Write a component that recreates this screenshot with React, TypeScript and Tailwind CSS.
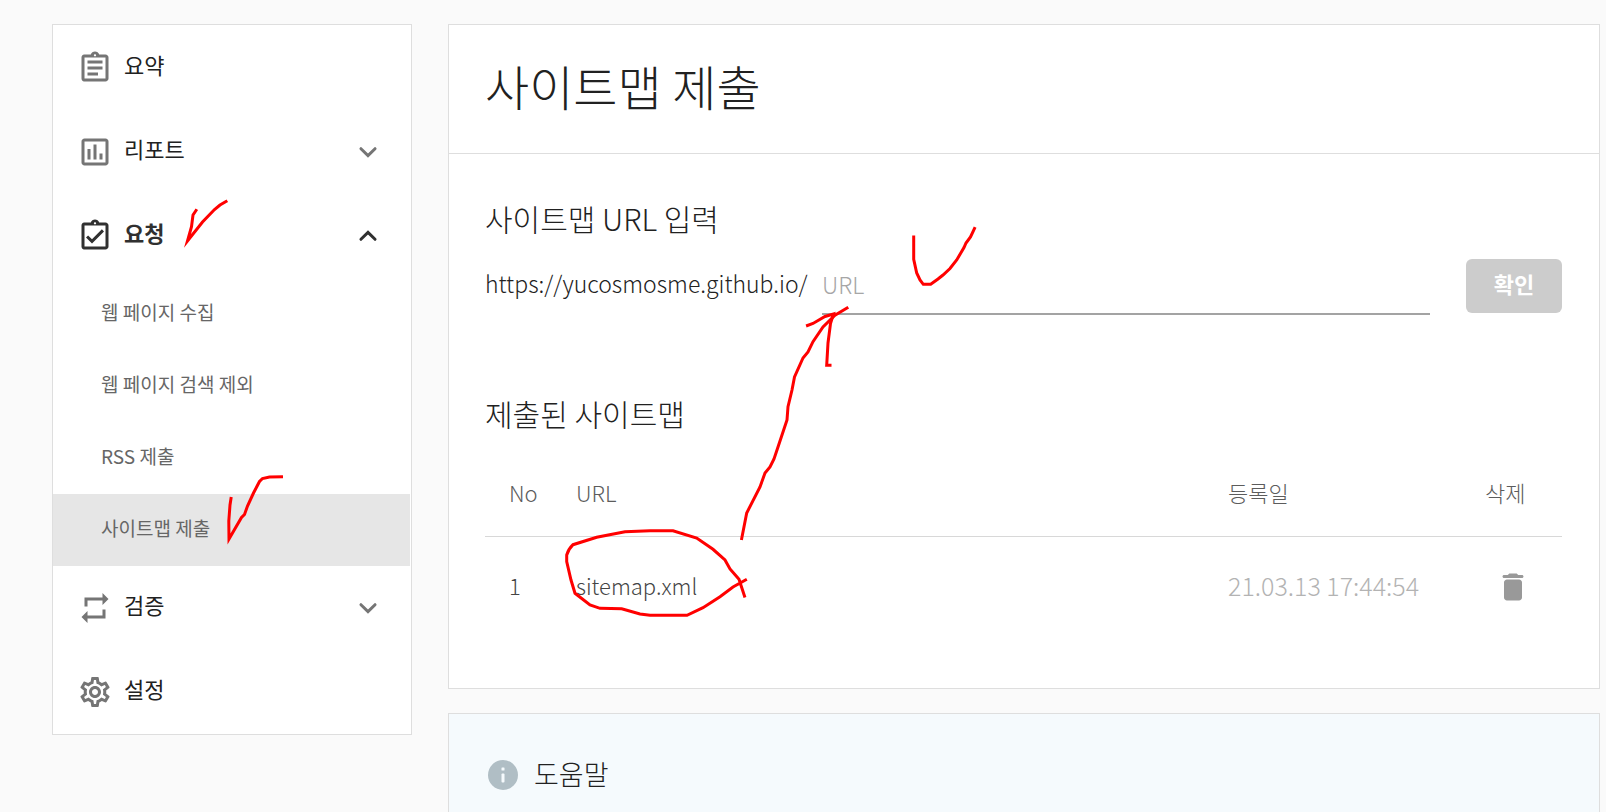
import { useState } from "react";
import type { ReactNode } from "react";
import {
  MdOutlineAssessment,
  MdOutlineAssignment,
  MdOutlineAssignmentTurnedIn,
  MdOutlineSettings,
  MdRepeat,
} from "react-icons/md";

const subItems = ["웹 페이지 수집", "웹 페이지 검색 제외", "RSS 제출", "사이트맵 제출"];

const sitemaps = [{ no: 1, url: "sitemap.xml", date: "21.03.13 17:44:54" }];

function Chevron({ open }: { open?: boolean }) {
  return (
    <svg
      viewBox="0 0 24 24"
      className="size-9"
      fill="none"
      stroke="currentColor"
      strokeWidth="2"
      strokeLinecap="round"
      strokeLinejoin="miter"
      aria-hidden="true"
    >
      <path d={open ? "M7.3 14.2 12 9.6l4.7 4.6" : "M7.3 9.8 12 14.4l4.7-4.6"} />
    </svg>
  );
}

function TrashIcon() {
  return (
    <svg viewBox="0 0 24 24" className="size-9" fill="currentColor" aria-hidden="true">
      <path d="M6 19c0 1.1.9 2 2 2h8c1.1 0 2-.9 2-2V9c0-1.1-.9-2-2-2H8c-1.1 0-2 .9-2 2v10zM18 4h-2.5l-.71-.71c-.18-.18-.44-.29-.7-.29H9.91c-.26 0-.52.11-.7.29L8.5 4H6c-.55 0-1 .45-1 1s.45 1 1 1h12c.55 0 1-.45 1-1s-.45-1-1-1z" />
    </svg>
  );
}

function InfoIcon() {
  return (
    <svg viewBox="0 0 24 24" className="size-9 text-[#b0bec5]" aria-hidden="true">
      <circle cx="12" cy="12" r="10" fill="currentColor" />
      <rect x="11" y="7" width="2" height="2" rx="0.4" fill="#f5fafd" />
      <rect x="11" y="11" width="2" height="6" rx="0.6" fill="#f5fafd" />
    </svg>
  );
}

function NavItem({
  icon,
  label,
  active,
  expandable,
}: {
  icon: ReactNode;
  label: string;
  active?: boolean;
  expandable?: boolean;
}) {
  return (
    <button
      type="button"
      aria-expanded={expandable ? !!active : undefined}
      className={`flex h-21 w-full items-center pr-[25px] pl-6 text-left ${active ? "text-[#303030]" : "text-[#757575]"}`}
    >
      {icon}
      <span
        className={`ml-[11px] flex-1 pb-2 text-[22px] leading-8 ${active ? "font-bold text-[#303030]" : "text-[#212121]"}`}
      >
        {label}
      </span>
      {expandable && <Chevron open={active} />}
    </button>
  );
}

function Sidebar() {
  return (
    <nav className="w-90 shrink-0 border border-[#dedede] bg-white pt-px">
      <NavItem icon={<MdOutlineAssignment className="size-9" />} label="요약" />
      <NavItem icon={<MdOutlineAssessment className="size-9" />} label="리포트" expandable />
      <NavItem icon={<MdOutlineAssignmentTurnedIn className="size-9" />} label="요청" active expandable />
      <ul className="pr-px">
        {subItems.map((item) => (
          <li key={item}>
            <a
              href="#"
              className={`flex h-18 items-center pb-1 pl-12 text-[19px] leading-7 text-[#666666] ${
                item === "사이트맵 제출" ? "bg-[#e6e6e6]" : ""
              }`}
            >
              {item}
            </a>
          </li>
        ))}
      </ul>
      <NavItem icon={<MdRepeat className="size-9" />} label="검증" expandable />
      <NavItem icon={<MdOutlineSettings className="size-9" />} label="설정" />
    </nav>
  );
}

function SitemapForm() {
  const [url, setUrl] = useState("");
  return (
    <form onSubmit={(e) => e.preventDefault()}>
      <h2 className="text-[30px] leading-10 font-light text-[#212121]">사이트맵 URL 입력</h2>
      <div className="mt-[21px] flex h-14 items-start">
        <label
          htmlFor="sitemap-url"
          className="w-[337px] shrink-0 pt-2 text-[23px] leading-8 font-light text-[#222222]"
        >
          https://yucosmosme.github.io/
        </label>
        <input
          id="sitemap-url"
          type="text"
          placeholder="URL"
          value={url}
          onChange={(e) => setUrl(e.target.value)}
          className="h-14 min-w-0 flex-1 border-b-2 border-[#a3a3a3] bg-transparent pb-1 text-[23px] font-light text-[#333333] outline-none placeholder:text-[#a6a6a6]"
        />
        <button
          type="submit"
          className="ml-9 h-[54px] w-24 rounded-md bg-[#cccccc] pb-1.5 text-[22px] leading-8 font-bold text-white"
        >
          확인
        </button>
      </div>
    </form>
  );
}

function SitemapTable() {
  return (
    <table className="mt-4 w-full table-fixed text-left text-[22px] leading-8 font-light">
      <thead>
        <tr className="h-[87px] border-b border-[#d8d8d8] text-[#5c5c5c]">
          <th className="w-[91px] pl-6 font-light">No</th>
          <th className="font-light">URL</th>
          <th className="w-[257px] font-light">등록일</th>
          <th className="w-[77px] font-light">삭제</th>
        </tr>
      </thead>
      <tbody>
        {sitemaps.map((row) => (
          <tr key={row.no} className="h-25 text-[#444444]">
            <td className="pb-0.5 pl-6">{row.no}</td>
            <td className="pb-0.5">{row.url}</td>
            <td className="pb-0.5 text-[25px] text-[#b3b3b3]">{row.date}</td>
            <td className="pt-0.5 pl-2.5">
              <button type="button" aria-label="삭제" className="block text-[#999999]">
                <TrashIcon />
              </button>
            </td>
          </tr>
        ))}
      </tbody>
    </table>
  );
}

function Annotations() {
  return (
    <svg
      className="pointer-events-none absolute top-0 left-0 h-[812px] w-[1606px]"
      viewBox="0 0 1606 812"
      fill="none"
      stroke="#ff0000"
      strokeWidth="3"
      strokeLinejoin="miter"
      strokeMiterlimit="8"
      strokeLinecap="square"
      aria-hidden="true"
    >
      <path d="M196 210.500 L193 215 L191.500 226.700 L187.500 241 L202.500 222 L214.500 209.500 L220 205 L226 201.500" />
      <path d="M231 498.500 L230 505 L228.800 521 L229 539 L241.500 517.500 L244.500 514.500 L247.500 506 L253.500 493 L259.500 481.500 L262.500 478.500 L269.500 477 L281.500 476.700" />
      <path d="M913.700 237 V259.300 L916.700 273 L920 280 L923.300 284.300 H930.700 L938 279 L943 275 L950 268.500 L956.700 260 L964 247.500 L966 243 L970.500 237 L974.500 228.500" />
      <path d="M847 308 L835 315.300 L823 327 L813 341.700 L808 352 L803 358 L794.500 377 L792 390 L788 406.700 L787 420 L778 447 L774 459 L770 467 L765 473 L760 487 L746.700 513 L741.700 538.500" />
      <path d="M807.500 325.500 L813 323.500 L825 316.500 L833.500 314 L830.500 323.500 L828 343 L826.700 365.300 L830 365.300" />
      <path d="M745.500 580 L733 587 L720 596.700 L703 607.700 L687 615.300 H650 L640 614 L621.700 608.700 L600 608.300 L590 605 L575 593.300 L571 580 L566.700 561.700 V555 Q568.500 549 573 544.700 L596.700 537.300 L625 531.700 L650 530.700 H673 L696.700 538 L713 549.300 L725 560 L730 569 L739 579.300 L744.500 596" />
    </svg>
  );
}

export default function App() {
  return (
    <div className="relative h-screen overflow-hidden bg-[#fafafa] font-['Noto_Sans_CJK_KR',sans-serif]">
      <div className="flex items-start gap-9 pt-6 pr-1.5 pl-[52px]">
        <Sidebar />
        <div className="flex min-w-0 flex-1 flex-col gap-6">
          <main className="border border-[#dedede] bg-white">
            <header className="flex h-[129px] items-center border-b border-[#dedede] px-9 pb-2">
              <h1 className="text-[48px] leading-16 font-light text-[#212121]">사이트맵 제출</h1>
            </header>
            <div className="pt-11 pr-[37px] pb-13 pl-9">
              <SitemapForm />
              <h2 className="mt-[78px] text-[30px] leading-10 font-light text-[#212121]">제출된 사이트맵</h2>
              <SitemapTable />
            </div>
          </main>
          <aside className="flex h-60 items-start border border-[#dedede] bg-[#f5fafd] px-9 pt-[43px]">
            <InfoIcon />
            <h2 className="ml-[13px] text-[27px] leading-[34px] font-light text-[#212121]">도움말</h2>
          </aside>
        </div>
      </div>
      <Annotations />
    </div>
  );
}
